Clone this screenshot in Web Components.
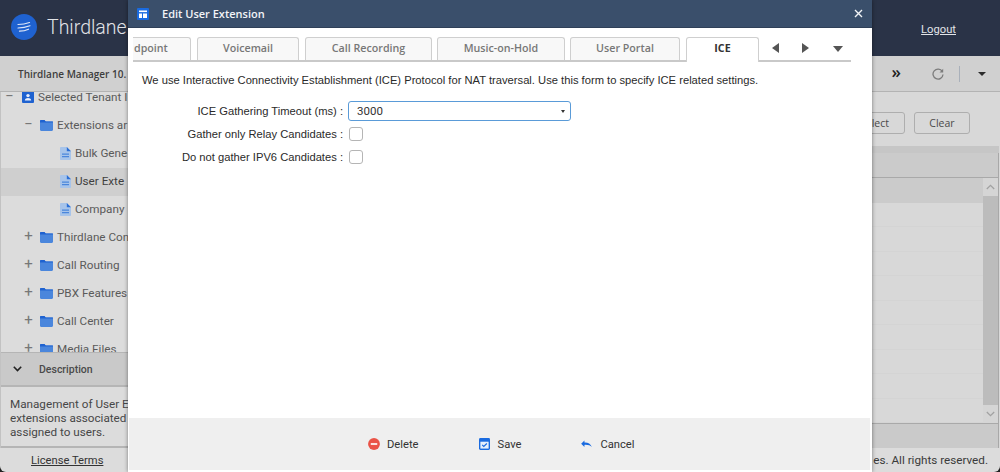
<!DOCTYPE html>
<html>
<head>
<meta charset="utf-8">
<title>Edit User Extension</title>
<style>
  html, body { margin: 0; height: 100%; background: #222; overflow: hidden; }
</style>
</head>
<body>
<tl-app>
  <tl-header slot="header"></tl-header>
  <tl-toolbar slot="toolbar"></tl-toolbar>
  <tl-sidebar slot="sidebar">
    <tl-tree-row level="0" icon="tenant" expand="-">Selected Tenant I</tl-tree-row>
    <tl-tree-row level="1" icon="folder" expand="-">Extensions ar</tl-tree-row>
    <tl-tree-row level="2" icon="doc">Bulk Gene</tl-tree-row>
    <tl-tree-row level="2" icon="doc" selected>User Exte</tl-tree-row>
    <tl-tree-row level="2" icon="doc">Company</tl-tree-row>
    <tl-tree-row level="1" icon="folder" expand="+">Thirdlane Con</tl-tree-row>
    <tl-tree-row level="1" icon="folder" expand="+">Call Routing</tl-tree-row>
    <tl-tree-row level="1" icon="folder" expand="+">PBX Features</tl-tree-row>
    <tl-tree-row level="1" icon="folder" expand="+">Call Center</tl-tree-row>
    <tl-tree-row level="1" icon="folder" expand="+">Media Files</tl-tree-row>
  </tl-sidebar>
  <tl-grid slot="content"></tl-grid>
</tl-app>

<tl-modal heading="Edit User Extension">
  <tl-tabs slot="tabs">
    <tl-tab class="cut" style="width:58px">dpoint</tl-tab>
    <tl-tab style="width:102px;margin-left:1px">Voicemail</tl-tab>
    <tl-tab style="width:127px;margin-left:1px">Call Recording</tl-tab>
    <tl-tab style="width:128px">Music-on-Hold</tl-tab>
    <tl-tab style="width:110px">User Portal</tl-tab>
    <tl-tab style="width:73px;margin-left:1px" active>ICE</tl-tab>
  </tl-tabs>
  <p>We use Interactive Connectivity Establishment (ICE) Protocol for NAT traversal. Use this form to specify ICE related settings.</p>
  <tl-form-row label="ICE Gathering Timeout (ms) :"><tl-select value="3000"></tl-select></tl-form-row>
  <tl-form-row label="Gather only Relay Candidates :"><tl-check></tl-check></tl-form-row>
  <tl-form-row label="Do not gather IPV6 Candidates :"><tl-check></tl-check></tl-form-row>
  <tl-action slot="actions" icon="delete">Delete</tl-action>
  <tl-action slot="actions" icon="save">Save</tl-action>
  <tl-action slot="actions" icon="cancel">Cancel</tl-action>
</tl-modal>

<script>
// small helper, every element is just a template in an open shadow root
function define(name, html, setup) {
  const tpl = document.createElement("template");
  tpl.innerHTML = html;
  customElements.define(name, class extends HTMLElement {
    constructor() {
      super();
      this.attachShadow({ mode: "open" });
      this.shadowRoot.appendChild(tpl.content.cloneNode(true));
    }
    connectedCallback() {
      if (setup) setup(this, this.shadowRoot);
    }
  });
}

const icons = {
  tenant: `<svg width="12" height="12" viewBox="0 0 12 12"><rect width="12" height="12" rx="1" fill="#1f62d0"/><circle cx="6" cy="4.6" r="1.7" fill="#e8eefa"/><path d="M2.8 9.6c.3-1.8 1.6-2.5 3.2-2.5s2.9.7 3.2 2.5z" fill="#e8eefa"/></svg>`,
  folder: `<svg width="13" height="11" viewBox="0 0 13 11"><path d="M0 1.2C0 .5.5 0 1.2 0h3.2l1.3 1.4h6.1c.7 0 1.2.5 1.2 1.2v7.2c0 .7-.5 1.2-1.2 1.2H1.2C.5 11 0 10.500 0 9.800z" fill="#4a86dc"/><path d="M0 1.200C0 .5.500 0 1.200 0h3.200l1.300 1.400 h7.300v1H0z" fill="#1f62d0"/></svg>`,
  doc: `<svg width="11" height="13" viewBox="0 0 11 13"><path d="M0 .8C0 .4.400 0 .8 0h6L11 4.200v8c0 .4-.4.800-.8.800H.8c-.4 0-.8-.4-.8-.8z" fill="#a7c4ea"/><path d="M6.800 0 11 4.200H6.800z" fill="#2a6fd6"/><path d="M2 6.500h7v1.300H2zM2 9h7v1.300H2z" fill="#4a86dc"/></svg>`,
  delete: `<svg width="12" height="12" viewBox="0 0 13 13"><circle cx="6.500" cy="6.500" r="6.400" fill="#ea5347"/><rect x="3" y="5.400" width="7" height="2.200" fill="#fbe3e0"/></svg>`,
  save: `<svg width="11" height="12" viewBox="0 0 12 13"><rect width="12" height="13" rx="1.500" fill="#1a6be0"/><rect x="1.500" y="4" width="9" height="7.500" fill="#e6effc"/><path d="M3.500 7.500 5.200 9.200 8.600 6" fill="none" stroke="#1a6be0" stroke-width="1.300"/></svg>`,
  cancel: `<svg width="11" height="8" viewBox="0 0 12 9"><path d="M3.700 0v2.200C7.600 2 10.500 3.500 12 7.500 10.200 5.600 7.800 4.800 3.700 5v2.400L0 3.700z" fill="#1a6be0" transform="translate(0 .5)"/></svg>`
};

define("tl-app", `
<style>
  :host { display: flex; flex-direction: column; height: 472px; font-family: Roboto, sans-serif; }
  .main { flex: 1; display: flex; min-height: 0; }
  .foot {
    height: 24px; flex: none; display: flex; align-items: center; box-sizing: border-box;
    background: #dcdcdc; border-radius: 0 0 6px 6px; padding: 0 12px 0 31px;
    font-size: 11.200px; color: #3a3a3a;
  }
  .foot u { color: #333; width: 842px; flex: none; }
  .foot span { font-size: 11.700px; flex: 1; text-align: right; white-space: nowrap; }
</style>
<slot name="header"></slot>
<slot name="toolbar"></slot>
<div class="main">
  <slot name="sidebar"></slot>
  <slot name="content"></slot>
</div>
<div class="foot"><u>License Terms</u><span>es. All rights reserved.</span></div>
`);

define("tl-header", `
<style>
  :host {
    display: flex; align-items: center; height: 56px; flex: none; box-sizing: border-box;
    padding: 0 44px 2px 11px; background: #2a3347; color: #e2e4e8;
  }
  .name { font: 300 19.500px Roboto, sans-serif; margin-left: 10px; flex: 1; }
  a { font: 11.200px Roboto, sans-serif; color: #e2e4e8; text-decoration: underline; margin-top: 4px; }
</style>
<svg width="26" height="26" viewBox="0 0 26 26">
  <circle cx="13" cy="13" r="13" fill="#1f62d0"/>
  <g fill="none" stroke="#dfe8f8" stroke-width="1.200" stroke-linecap="round">
    <path d="M7 10.500c3.500 0 7.500-.5 11.500-2"/>
    <path d="M7 14c3.500 0 7.500-.5 12-2.200"/>
    <path d="M8.500 17.200c3 0 6-.5 9-2"/>
  </g>
</svg>
<span class="name">Thirdlane</span>
<a>Logout</a>
`);

define("tl-toolbar", `
<style>
  :host {
    display: flex; align-items: center; height: 36px; flex: none; box-sizing: border-box;
    padding: 0 12px 0 18px; background: #d0d0d0; border-bottom: 1px solid #b3b3b3;
  }
  .title { font: 600 10px "Open Sans", sans-serif; color: #3d3d3d; flex: 1; }
  .more { font: 600 17px "Open Sans", sans-serif; color: #222; margin-right: 31px; position: relative; top: -2px; }
  .sep { width: 1px; height: 16px; background: #a9b0ba; margin: 0 18px 0 15px; }
  .caret { width: 0; height: 0; border: 4px solid transparent; border-top: 4px solid #2b2b2b; border-bottom: 0; margin-right: 2px; }
</style>
<span class="title">Thirdlane Manager 10.</span>
<span class="more">»</span>
<svg width="12" height="12" viewBox="0 0 12 12"><path d="M10.300 3.500A5 5 0 1 0 11 6.500" fill="none" stroke="#7c7c7c" stroke-width="1.300"/><path d="M11.200 .8v3.700H7.500z" fill="#7c7c7c"/></svg>
<span class="sep"></span>
<span class="caret"></span>
`);

define("tl-sidebar", `
<style>
  :host { display: flex; flex-direction: column; width: 128px; flex: none; background: #dcdcdc; border-left: 1px solid #c2c2c2; box-sizing: border-box; }
  .tree { height: 260px; flex: none; overflow: hidden; }
  .inner { margin-top: -8px; }
  .head {
    height: 35px; flex: none; box-sizing: border-box; display: flex; align-items: center; gap: 17px; padding-left: 12px;
    background: #c9c9c9; border-top: 1px solid #b5b5b5; border-bottom: 2px solid #b5b5b5;
    font: 500 10.500px Roboto, sans-serif; color: #4a4a4a;
  }
  .desc {
    flex: 1; box-sizing: border-box; padding: 10px 0 0 9px; font: 11.700px/14px Roboto, sans-serif; color: #474747;
    border-bottom: 2px solid #b5b5b5; white-space: nowrap;
  }
</style>
<div class="tree"><div class="inner"><slot></slot></div></div>
<div class="head">
  <svg width="9" height="6" viewBox="0 0 9 6"><path d="M.8 .8 4.500 4.500 8.200 .8" fill="none" stroke="#222" stroke-width="1.600"/></svg>
  <span>Description</span>
</div>
<div class="desc">Management of User E<br>extensions associated<br>assigned to users.</div>
`);

define("tl-tree-row", `
<style>
  :host { display: block; height: 28px; }
  :host([selected]) { background: #cfcfcf; }
  .row {
    display: flex; align-items: center; height: 100%; box-sizing: border-box; padding-bottom: 2px; gap: 4px; white-space: nowrap;
    font: 11.700px Roboto, sans-serif; color: #5a5a5a;
  }
  :host([selected]) .row { color: #3f3f3f; }
  .exp { flex: none; width: 11px; text-align: center; color: #777; font-size: 15px; line-height: 1; margin-right: 2px; position: relative; top: -1px; }
  .ico { flex: none; }
  svg { display: block; }
</style>
<div class="row"><span class="exp"></span><span class="ico"></span><span><slot></slot></span></div>
`, (el, root) => {
  const level = el.getAttribute("level");
  const row = root.querySelector(".row");
  const exp = root.querySelector(".exp");
  root.querySelector(".ico").innerHTML = icons[el.getAttribute("icon")];
  const sign = el.getAttribute("expand");
  row.style.paddingLeft = ["3px", "22px", "59px"][level];
  if (sign) exp.textContent = sign === "-" ? "−" : "+";
  else exp.style.display = "none";
  exp.style.marginRight = level === "0" ? "3px" : "2px";
});

define("tl-grid", `
<style>
  :host { display: flex; flex-direction: column; flex: 1; min-width: 0; background: #d8d8d8; padding-right: 1px; }
  .filter {
    height: 54px; flex: none; display: flex; justify-content: flex-end; align-items: flex-start; gap: 9px;
    padding: 20px 29px 0 0; box-sizing: border-box;
  }
  .btn {
    height: 22px; box-sizing: border-box; border: 1px solid #aeaeae; border-radius: 3px;
    font: 10.500px/20px "Open Sans", sans-serif; color: #4a4a4a; text-align: center;
  }
  .band { height: 7px; flex: none; background: #c6c6c6; }
  .table { flex: 1; display: flex; flex-direction: column; border-right: 1px solid #a8a8a8; min-height: 0; }
  .hd { height: 25px; flex: none; background: #cbcbcb; border-bottom: 1px solid #a9a9a9; box-sizing: border-box; }
  .body { flex: 1; display: flex; min-height: 0; }
  .rows { flex: 1; display: flex; flex-direction: column; }
  .rows div { flex: 1; background: #d8d8d8; border-bottom: 1px solid #d4d4d4; }
  .rows div:first-child { background: #cbcbcb; flex: none; height: 25px; border: 0; }
  .sb { width: 15px; flex: none; display: flex; flex-direction: column; background: #bcbcbc; }
  .sb span { height: 18px; display: flex; align-items: center; justify-content: center; background: #d5d5d5; }
  .sb i { flex: 1; }
  .ft { height: 25px; flex: none; background: #cacaca; border-top: 1px solid #a9a9a9; box-sizing: border-box; }
</style>
<div class="filter"><div class="btn" style="width:62px;text-align:right;padding-right:15px">lect</div><div class="btn" style="width:56px">Clear</div></div>
<div class="band"></div>
<div class="table">
  <div class="hd"></div>
  <div class="body">
    <div class="rows"><div></div><div></div><div></div><div></div><div></div><div></div><div></div><div></div><div></div><div></div></div>
    <div class="sb">
      <span><svg width="9" height="6" viewBox="0 0 9 6"><path d="M.8 5 4.500 1.300 8.200 5" fill="none" stroke="#a2a2a2" stroke-width="1.300"/></svg></span>
      <i></i>
      <span><svg width="9" height="6" viewBox="0 0 9 6"><path d="M.8 1 4.500 4.700 8.200 1" fill="none" stroke="#a2a2a2" stroke-width="1.300"/></svg></span>
    </div>
  </div>
  <div class="ft"></div>
</div>
`);

// the dialog lies over the page, so this one is absolute
define("tl-modal", `
<style>
  :host {
    position: absolute; left: 128px; top: 0; width: 744px; height: 472px;
    display: flex; flex-direction: column; background: #fff;
    box-shadow: 0 0 4px rgba(0,0,0,.45); font: 11.200px "Liberation Sans", Arial, sans-serif; color: #2a2a2a;
  }
  .title {
    height: 28px; flex: none; display: flex; align-items: center; box-sizing: border-box; padding: 0 9px 0 9px;
    background: #3a4f6b; color: #f2f4f7; border-bottom: 1px solid #2f4058;
  }
  .title b { font: 600 11px "Open Sans", sans-serif; margin-left: 13px; flex: 1; }
  .tabs { height: 32px; flex: none; margin: 0 21px 0 5px; padding-top: 9px; box-sizing: content-box; }
  .content { flex: 1; min-height: 0; }
  ::slotted(p) { margin: 4px 0 12px 14px; line-height: 14px; font-size: 11.200px; color: #2a2a2a; }
  .actions {
    height: 52px; flex: none; margin: 0 2px 2px 1px; background: #efefef; box-sizing: border-box; padding-left: 239px;
    display: flex; align-items: center; gap: 60px;
  }
</style>
<div class="title">
  <svg width="12" height="12" viewBox="0 0 12 12"><rect width="12" height="12" rx="1" fill="#1a6be0"/><rect x="2" y="2.500" width="8" height="1.600" fill="#fff"/><rect x="2" y="5.500" width="3" height="4.500" fill="#fff"/><rect x="6" y="5.500" width="4" height="4.500" fill="#fff"/></svg>
  <b id="h"></b>
  <svg width="9" height="9" viewBox="0 0 9 9"><path d="M1 1 8 8M8 1 1 8" stroke="#f2f4f7" stroke-width="1.400"/></svg>
</div>
<div class="tabs"><slot name="tabs"></slot></div>
<div class="content"><slot></slot></div>
<div class="actions"><slot name="actions"></slot></div>
`, (el, root) => {
  root.getElementById("h").textContent = el.getAttribute("heading");
});

define("tl-tabs", `
<style>
  :host { display: flex; height: 23px; border-bottom: 2px solid #c9c9c9; position: relative; }
  .strip { display: flex; gap: 5px; width: 626px; flex: none; height: 25px; }
  .arrows { display: flex; align-items: center; height: 21px; }
  i { display: block; width: 0; height: 0; border-style: solid; border-color: transparent; }
</style>
<div class="strip"><slot></slot></div>
<div class="arrows">
  <i style="margin-left:13px;border-width:5.500px 7px 5.500px 0;border-right-color:#555"></i>
  <i style="margin-left:23px;border-width:5.500px 0 5.500px 7px;border-left-color:#555"></i>
  <i style="margin-left:24px;margin-top:3px;border-width:6px 5px 0;border-top-color:#555"></i>
</div>
`);

define("tl-tab", `
<style>
  :host {
    display: flex; align-items: center; justify-content: center; flex: none; height: 23px;
    box-sizing: border-box; padding-bottom: 3px; background: #f8f8f8; border: 1px solid #cfcfcf; border-bottom: 0; border-radius: 3px 3px 0 0;
    font: 600 10.700px "Open Sans", sans-serif; color: #777;
  }
  :host(.cut) { justify-content: flex-start; padding-left: 1px; border-left: 0; border-radius: 0 3px 0 0; }
  :host([active]) { background: #fff; color: #333; font-weight: 700; height: 25px; padding-bottom: 5px; }
</style>
<slot></slot>
`);

define("tl-form-row", `
<style>
  :host { display: grid; grid-template-columns: 215px 1fr; column-gap: 5px; align-items: center; height: 23px; font: 11.200px "Liberation Sans", Arial, sans-serif; color: #2a2a2a; }
  label { text-align: right; }
</style>
<label id="l"></label>
<div><slot></slot></div>
`, (el, root) => {
  root.getElementById("l").textContent = el.getAttribute("label");
});

define("tl-select", `
<style>
  :host {
    display: flex; align-items: center; justify-content: space-between; width: 223px; height: 20px; box-sizing: border-box;
    border: 1.500px solid #5a9bd8; border-radius: 3px; padding: 0 5px 0 8px; font: 11.500px Roboto, sans-serif; color: #333;
  }
  i { width: 0; height: 0; border: 2.500px solid transparent; border-top: 3px solid #333; border-bottom: 0; margin-top: 2px; }
</style>
<span id="v"></span><i></i>
`, (el, root) => {
  root.getElementById("v").textContent = el.getAttribute("value");
});

define("tl-check", `
<style>
  :host { display: block; width: 14px; height: 14px; margin-left: 1px; box-sizing: border-box; border: 1px solid #b5b5b5; border-radius: 3px; background: #fff; }
</style>
`);

define("tl-action", `
<style>
  :host { display: flex; align-items: center; gap: 8px; font: 11.200px Roboto, sans-serif; color: #333; }
  :host([icon="delete"]) { gap: 7px; }
  svg { display: block; }
</style>
<span id="i"></span><slot></slot>
`, (el, root) => {
  root.getElementById("i").innerHTML = icons[el.getAttribute("icon")];
});
</script>
</body>
</html>
